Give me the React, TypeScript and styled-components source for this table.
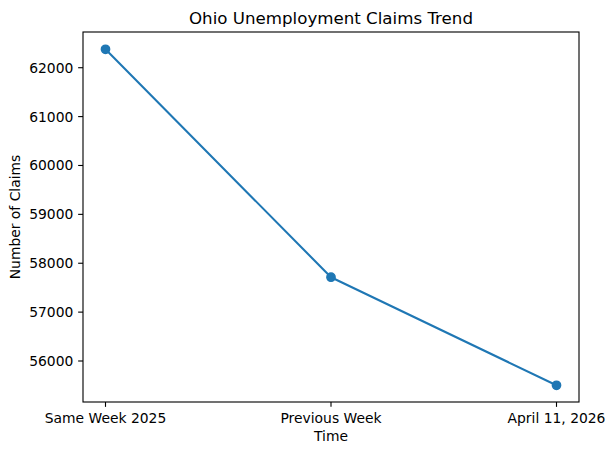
import React from "react";
import styled, { createGlobalStyle } from "styled-components";

const GlobalStyle = createGlobalStyle`
  html, body { margin: 0; padding: 0; background: #ffffff; }
  #root { width: 615px; height: 455px; }
`;

const Figure = styled.div`
  width: 615px;
  height: 455px;
  background: #ffffff;
  overflow: hidden;
`;

const Chart = styled.svg`
  display: block;
  font-family: "DejaVu Sans", "Liberation Sans", sans-serif;
`;

const Title = styled.text`
  font-size: 16.67px;
  fill: #000;
`;

const TickLabel = styled.text`
  font-size: 13.89px;
  fill: #000;
`;

const AxisLabel = styled.text`
  font-size: 13.89px;
  fill: #000;
`;

const AX = { left: 83, top: 32, width: 496, height: 370 };
const xCats = [
  { label: "Same Week 2025", x: 105.5 },
  { label: "Previous Week", x: 331 },
  { label: "April 11, 2026", x: 556.5 },
];
const data = [62377, 57714, 55503];
const yOf = (v: number) => 361 - ((v - 56000) / 1000) * 48.88;
const yTicks = [56000, 57000, 58000, 59000, 60000, 61000, 62000];
const color = "#1f77b4";

export default function App() {
  const pts = data.map((v, i) => [xCats[i].x, yOf(v)]);
  const bottom = AX.top + AX.height;
  return (
    <>
      <GlobalStyle />
      <Figure>
        <Chart width={615} height={455} viewBox="0 0 615 455">
          <Title x={331} y={24} textAnchor="middle">
            Ohio Unemployment Claims Trend
          </Title>
          {yTicks.map((t) => {
            const y = yOf(t);
            return (
              <g key={t}>
                <line x1={AX.left - 4.86} x2={AX.left} y1={y} y2={y} stroke="#000" strokeWidth={1.11} />
                <TickLabel x={73.3} y={y + 5} textAnchor="end">
                  {t}
                </TickLabel>
              </g>
            );
          })}
          {xCats.map((c) => (
            <g key={c.label}>
              <line x1={c.x} x2={c.x} y1={bottom} y2={bottom + 4.86} stroke="#000" strokeWidth={1.11} />
              <TickLabel x={c.x} y={423.3} textAnchor="middle">
                {c.label}
              </TickLabel>
            </g>
          ))}
          <polyline
            points={pts.map((p) => p.join(",")).join(" ")}
            fill="none"
            stroke={color}
            strokeWidth={2.08}
            strokeLinejoin="round"
            strokeLinecap="square"
          />
          {pts.map((p, i) => (
            <circle key={i} cx={p[0]} cy={p[1]} r={4.17} fill={color} stroke={color} strokeWidth={1.39} />
          ))}
          <rect
            x={AX.left}
            y={AX.top}
            width={AX.width}
            height={AX.height}
            fill="none"
            stroke="#000"
            strokeWidth={1.11}
          />
          <AxisLabel x={331} y={441} textAnchor="middle">
            Time
          </AxisLabel>
          <AxisLabel
            x={0}
            y={0}
            textAnchor="middle"
            transform={`translate(19.5, ${AX.top + AX.height / 2}) rotate(-90)`}
          >
            Number of Claims
          </AxisLabel>
        </Chart>
      </Figure>
    </>
  );
}
